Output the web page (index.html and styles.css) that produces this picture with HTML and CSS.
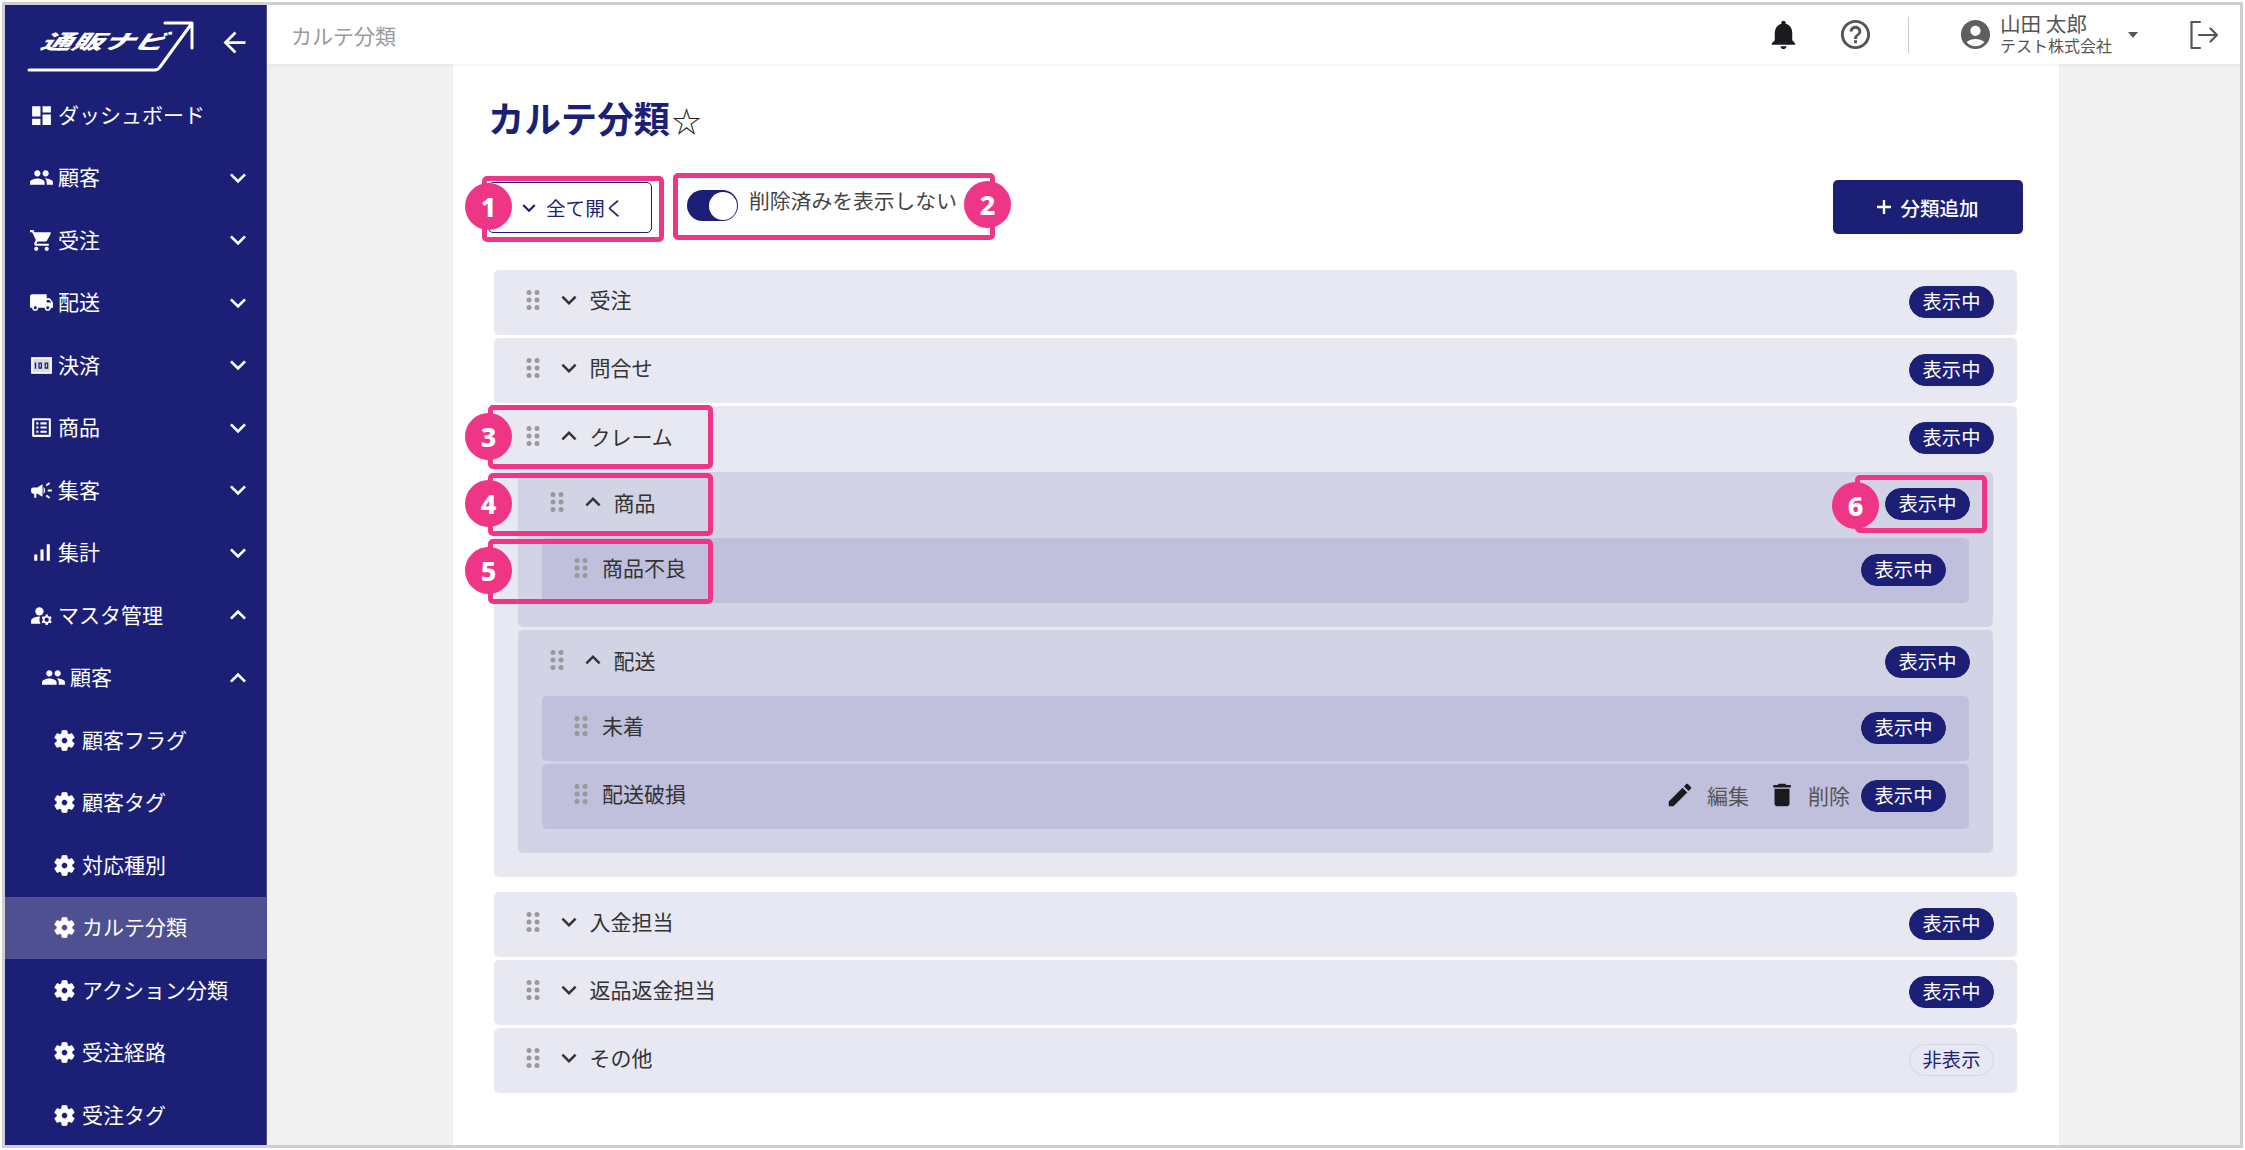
FILE: index.html
```html
<!DOCTYPE html>
<html lang="ja">
<head>
<meta charset="utf-8">
<title>カルテ分類</title>
<link rel="stylesheet" href="styles.css">
</head>
<body>
<svg class="defs" width="0" height="0" aria-hidden="true">
  <defs>
    <symbol id="i-more" viewBox="0 0 24 24"><path d="M16.59 8.59L12 13.17 7.41 8.59 6 10l6 6 6-6z"/></symbol>
    <symbol id="i-less" viewBox="0 0 24 24"><path d="M12 8l-6 6 1.41 1.41L12 10.83l4.59 4.58L18 14z"/></symbol>
    <symbol id="i-people" viewBox="0 0 24 24"><path d="M16 11c1.66 0 2.99-1.34 2.99-3S17.66 5 16 5c-1.66 0-3 1.34-3 3s1.34 3 3 3zm-8 0c1.66 0 2.99-1.34 2.99-3S9.66 5 8 5C6.34 5 5 6.34 5 8s1.34 3 3 3zm0 2c-2.33 0-7 1.17-7 3.5V19h14v-2.5c0-2.33-4.67-3.5-7-3.5zm8 0c-.29 0-.62.02-.97.05 1.16.84 1.97 1.97 1.97 3.45V19h6v-2.5c0-2.33-4.67-3.5-7-3.5z"/></symbol>
    <symbol id="i-gear" viewBox="0 0 24 24"><path stroke="#fff" stroke-width=".7" d="M19.14 12.94c.04-.3.06-.61.06-.94 0-.32-.02-.64-.07-.94l2.03-1.58c.18-.14.23-.41.12-.61l-1.92-3.32c-.12-.22-.37-.29-.59-.22l-2.39.96c-.5-.38-1.03-.7-1.62-.94l-.36-2.54c-.04-.24-.24-.41-.48-.41h-3.84c-.24 0-.43.17-.47.41l-.36 2.54c-.59.24-1.13.57-1.62.94l-2.39-.96c-.22-.08-.47 0-.59.22L2.74 8.87c-.12.21-.08.47.12.61l2.03 1.58c-.05.3-.09.63-.09.94s.02.64.07.94l-2.03 1.58c-.18.14-.23.41-.12.61l1.92 3.32c.12.22.37.29.59.22l2.39-.96c.5.38 1.03.7 1.62.94l.36 2.54c.05.24.24.41.48.41h3.84c.24 0 .44-.17.47-.41l.36-2.54c.59-.24 1.13-.56 1.62-.94l2.39.96c.22.08.47 0 .59-.22l1.92-3.32c.12-.22.07-.47-.12-.61l-2.01-1.58zM12 15c-1.65 0-3-1.35-3-3s1.35-3 3-3 3 1.35 3 3-1.35 3-3 3z"/></symbol>
    <symbol id="i-drag" viewBox="0 0 14 22"><circle cx="3" cy="3.5" r="2.5"/><circle cx="11" cy="3.5" r="2.5"/><circle cx="3" cy="11" r="2.5"/><circle cx="11" cy="11" r="2.5"/><circle cx="3" cy="18.5" r="2.5"/><circle cx="11" cy="18.5" r="2.5"/></symbol>
  </defs>
</svg>

<div class="frame">
  <aside class="sidebar">
    <div class="brand">
      <div class="logo">
        <svg class="logo-mark" viewBox="0 0 175 56" fill="none" stroke="#fff" stroke-width="3" stroke-linecap="round" stroke-linejoin="round"><path d="M4 52H130q3 0 5-3L167 5M140 5h27V30"/></svg>
        <span class="logo-text">通販ナビ</span>
      </div>
      <svg class="back" viewBox="0 0 24 24"><path d="M20 11H7.83l5.59-5.59L12 4l-8 8 8 8 1.41-1.41L7.83 13H20v-2z"/></svg>
    </div>
    <nav class="nav">
      <a class="nav-item"><svg class="nav-icon" viewBox="0 0 24 24"><path d="M3 13h8V3H3v10zm0 8h8v-6H3v6zm10 0h8V11h-8v10zm0-18v6h8V3h-8z"/></svg><span>ダッシュボード</span></a>
      <a class="nav-item"><svg class="nav-icon"><use href="#i-people"/></svg><span>顧客</span><svg class="nav-chev"><use href="#i-more"/></svg></a>
      <a class="nav-item"><svg class="nav-icon" viewBox="0 0 24 24"><path d="M7 18c-1.1 0-1.99.9-1.99 2S5.9 22 7 22s2-.9 2-2-.9-2-2-2zM1 2v2h2l3.6 7.59-1.35 2.45c-.16.28-.25.61-.25.96 0 1.1.9 2 2 2h12v-2H7.42c-.14 0-.25-.11-.25-.25l.03-.12.9-1.63h7.45c.75 0 1.41-.41 1.75-1.03l3.58-6.49c.08-.14.12-.31.12-.48 0-.55-.45-1-1-1H5.21l-.94-2H1zm16 16c-1.1 0-1.99.9-1.99 2s.89 2 1.99 2 2-.9 2-2-.9-2-2-2z"/></svg><span>受注</span><svg class="nav-chev"><use href="#i-more"/></svg></a>
      <a class="nav-item"><svg class="nav-icon" viewBox="0 0 24 24"><path d="M20 8h-3V4H3c-1.1 0-2 .9-2 2v11h2c0 1.66 1.34 3 3 3s3-1.34 3-3h6c0 1.66 1.34 3 3 3s3-1.34 3-3h2v-5l-3-4zM6 18.5c-.83 0-1.5-.67-1.5-1.5s.67-1.5 1.5-1.5 1.5.67 1.5 1.5-.67 1.5-1.5 1.5zm13.5-9l1.96 2.5H17V9.5h2.5zm-1.5 9c-.83 0-1.5-.67-1.5-1.5s.67-1.5 1.5-1.5 1.5.67 1.5 1.5-.67 1.5-1.5 1.5z"/></svg><span>配送</span><svg class="nav-chev"><use href="#i-more"/></svg></a>
      <a class="nav-item"><svg class="nav-icon" viewBox="0 0 24 24"><rect x="2" y="4" width="20" height="16" fill="#fff"/><rect x="3.6" y="5.6" width="16.8" height="12.8" fill="#d9daea"/><path fill="#1c1f76" d="M5.5 9h1.4v6H5.5zM9 9h3.5v6H9zm1.2 1.3v3.4h1.1v-3.4zM15 9h3.5v6H15zm1.2 1.3v3.4h1.1v-3.4z"/></svg><span>決済</span><svg class="nav-chev"><use href="#i-more"/></svg></a>
      <a class="nav-item"><svg class="nav-icon" viewBox="0 0 24 24"><path d="M19 5v14H5V5h14m1.1-2H3.9c-.5 0-.9.4-.9.9v16.2c0 .4.4.9.9.9h16.2c.4 0 .9-.5.9-.9V3.9c0-.5-.5-.9-.9-.9zM11 7h6v2h-6V7zm0 4h6v2h-6v-2zm0 4h6v2h-6zM7 7h2v2H7zm0 4h2v2H7zm0 4h2v2H7z"/></svg><span>商品</span><svg class="nav-chev"><use href="#i-more"/></svg></a>
      <a class="nav-item"><svg class="nav-icon" viewBox="0 0 24 24"><path d="M18 11v2h4v-2h-4zm-2 6.61c.96.71 2.21 1.65 3.2 2.39.4-.53.8-1.07 1.2-1.6-.99-.74-2.24-1.68-3.2-2.4-.4.54-.8 1.08-1.2 1.61zM20.4 5.6c-.4-.53-.8-1.07-1.2-1.6-.99.74-2.24 1.68-3.2 2.4.4.53.8 1.07 1.2 1.6.96-.72 2.21-1.65 3.2-2.4zM4 9c-1.1 0-2 .9-2 2v2c0 1.1.9 2 2 2h1v4h2v-4h1l5 3V6L8 9H4zm11.5 3c0-1.33-.58-2.53-1.5-3.35v6.69c.92-.81 1.5-2.01 1.5-3.34z"/></svg><span>集客</span><svg class="nav-chev"><use href="#i-more"/></svg></a>
      <a class="nav-item"><svg class="nav-icon" viewBox="0 0 24 24"><path d="M17 4h3v16h-3V4zM5 14h3v6H5v-6zm6-5h3v11h-3V9z"/></svg><span>集計</span><svg class="nav-chev"><use href="#i-more"/></svg></a>
      <a class="nav-item"><svg class="nav-icon" viewBox="0 0 24 24"><circle cx="10" cy="8" r="4"/><path d="M10.67 13.02c-.22-.01-.44-.02-.67-.02-2.42 0-4.68.67-6.61 1.82-.88.52-1.39 1.5-1.39 2.53V20h9.26c-.79-1.13-1.26-2.51-1.26-4 0-1.07.25-2.07.67-2.98zM20.75 16c0-.22-.03-.42-.06-.63l1.14-1.01-1-1.73-1.45.49c-.32-.27-.68-.48-1.08-.63L18 11h-2l-.3 1.49c-.4.15-.76.36-1.08.63l-1.45-.49-1 1.73 1.14 1.01c-.03.21-.06.41-.06.63s.03.42.06.63l-1.14 1.01 1 1.73 1.45-.49c.32.27.68.48 1.08.63L16 21h2l.3-1.49c.4-.15.76-.36 1.08-.63l1.45.49 1-1.73-1.14-1.01c.03-.21.06-.41.06-.63zM17 18c-1.1 0-2-.9-2-2s.9-2 2-2 2 .9 2 2-.9 2-2 2z"/></svg><span>マスタ管理</span><svg class="nav-chev"><use href="#i-less"/></svg></a>
      <a class="nav-item nav-sub"><svg class="nav-icon"><use href="#i-people"/></svg><span>顧客</span><svg class="nav-chev"><use href="#i-less"/></svg></a>
      <a class="nav-item nav-leaf"><svg class="nav-icon"><use href="#i-gear"/></svg><span>顧客フラグ</span></a>
      <a class="nav-item nav-leaf"><svg class="nav-icon"><use href="#i-gear"/></svg><span>顧客タグ</span></a>
      <a class="nav-item nav-leaf"><svg class="nav-icon"><use href="#i-gear"/></svg><span>対応種別</span></a>
      <a class="nav-item nav-leaf is-active"><svg class="nav-icon"><use href="#i-gear"/></svg><span>カルテ分類</span></a>
      <a class="nav-item nav-leaf"><svg class="nav-icon"><use href="#i-gear"/></svg><span>アクション分類</span></a>
      <a class="nav-item nav-leaf"><svg class="nav-icon"><use href="#i-gear"/></svg><span>受注経路</span></a>
      <a class="nav-item nav-leaf"><svg class="nav-icon"><use href="#i-gear"/></svg><span>受注タグ</span></a>
    </nav>
  </aside>

  <div class="content">
    <header class="topbar">
      <div class="crumb">カルテ分類</div>
      <div class="top-actions">
        <svg class="top-icon bell" viewBox="0 0 24 24"><path d="M12 22c1.1 0 2-.9 2-2h-4c0 1.1.89 2 2 2zm6-6v-5c0-3.07-1.64-5.64-4.5-6.32V4c0-.83-.67-1.5-1.5-1.5s-1.5.67-1.5 1.5v.68C7.63 5.36 6 7.92 6 11v5l-2 2v1h16v-1l-2-2z"/></svg>
        <svg class="top-icon help" viewBox="0 0 24 24"><path d="M11 18h2v-2h-2v2zm1-16C6.48 2 2 6.48 2 12s4.48 10 10 10 10-4.48 10-10S17.52 2 12 2zm0 18c-4.41 0-8-3.59-8-8s3.59-8 8-8 8 3.59 8 8-3.59 8-8 8zm0-14c-2.21 0-4 1.79-4 4h2c0-1.1.9-2 2-2s2 .9 2 2c0 2-3 1.75-3 5h2c0-2.25 3-2.5 3-5 0-2.21-1.79-4-4-4z"/></svg>
        <span class="divider"></span>
        <svg class="top-icon account" viewBox="0 0 24 24"><path d="M12 2C6.48 2 2 6.48 2 12s4.48 10 10 10 10-4.48 10-10S17.52 2 12 2zm0 4c1.93 0 3.5 1.57 3.5 3.5S13.93 13 12 13s-3.5-1.57-3.5-3.5S10.07 6 12 6zm0 14c-2.03 0-4.43-.82-6.14-2.88C7.55 15.8 9.68 15 12 15s4.45.8 6.14 2.12C16.43 19.18 14.03 20 12 20z"/></svg>
        <div class="user">
          <div class="user-name">山田 太郎</div>
          <div class="user-org">テスト株式会社</div>
        </div>
        <span class="caret"></span>
        <svg class="logout" viewBox="0 0 30 30" fill="none" stroke="#555" stroke-width="2.2" stroke-linecap="round" stroke-linejoin="round"><path d="M11 2H2.5v26H11M10 15h18M21.5 8.5L28 15l-6.5 6.5"/></svg>
      </div>
    </header>

    <main class="main">
      <section class="card">
        <h1 class="title">カルテ分類<span class="star">☆</span></h1>
        <div class="toolbar">
          <button class="btn-open"><svg class="btn-chev"><use href="#i-more"/></svg>全て開く</button>
          <div class="switch-wrap">
            <span class="switch"><span class="knob"></span></span>
            <span class="switch-label">削除済みを表示しない</span>
          </div>
          <button class="btn-add"><svg class="plus" viewBox="0 0 16 16" fill="none" stroke="#fff" stroke-width="2.4"><path d="M8 1v14M1 8h14"/></svg>分類追加</button>
        </div>

        <div class="tree">
          <div class="node l1">
            <div class="row"><svg class="drag"><use href="#i-drag"/></svg><svg class="chev"><use href="#i-more"/></svg><span class="label">受注</span><span class="badge">表示中</span></div>
          </div>
          <div class="node l1">
            <div class="row"><svg class="drag"><use href="#i-drag"/></svg><svg class="chev"><use href="#i-more"/></svg><span class="label">問合せ</span><span class="badge">表示中</span></div>
          </div>
          <div class="node l1 is-open">
            <div class="row"><svg class="drag"><use href="#i-drag"/></svg><svg class="chev"><use href="#i-less"/></svg><span class="label">クレーム</span><span class="badge">表示中</span></div>
            <div class="children">
              <div class="node l2 is-open">
                <div class="row"><svg class="drag"><use href="#i-drag"/></svg><svg class="chev"><use href="#i-less"/></svg><span class="label">商品</span><span class="badge">表示中</span></div>
                <div class="children">
                  <div class="node l3">
                    <div class="row"><svg class="drag"><use href="#i-drag"/></svg><span class="label">商品不良</span><span class="badge">表示中</span></div>
                  </div>
                </div>
              </div>
              <div class="node l2 is-open">
                <div class="row"><svg class="drag"><use href="#i-drag"/></svg><svg class="chev"><use href="#i-less"/></svg><span class="label">配送</span><span class="badge">表示中</span></div>
                <div class="children">
                  <div class="node l3">
                    <div class="row"><svg class="drag"><use href="#i-drag"/></svg><span class="label">未着</span><span class="badge">表示中</span></div>
                  </div>
                  <div class="node l3">
                    <div class="row">
                      <svg class="drag"><use href="#i-drag"/></svg><span class="label">配送破損</span>
                      <span class="row-actions">
                        <svg class="act-icon" viewBox="0 0 24 24"><path d="M3 17.25V21h3.75L17.81 9.94l-3.75-3.75L3 17.25zM20.71 7.04c.39-.39.39-1.02 0-1.41l-2.34-2.34c-.39-.39-1.02-.39-1.41 0l-1.83 1.83 3.75 3.75 1.83-1.83z"/></svg><span class="act-text">編集</span>
                        <svg class="act-icon act-del" viewBox="0 0 24 24"><path d="M6 19c0 1.1.9 2 2 2h8c1.1 0 2-.9 2-2V7H6v12zM19 4h-3.5l-1-1h-5l-1 1H5v2h14V4z"/></svg><span class="act-text">削除</span>
                      </span>
                      <span class="badge">表示中</span>
                    </div>
                  </div>
                </div>
              </div>
            </div>
          </div>
          <div class="node l1">
            <div class="row"><svg class="drag"><use href="#i-drag"/></svg><svg class="chev"><use href="#i-more"/></svg><span class="label">入金担当</span><span class="badge">表示中</span></div>
          </div>
          <div class="node l1">
            <div class="row"><svg class="drag"><use href="#i-drag"/></svg><svg class="chev"><use href="#i-more"/></svg><span class="label">返品返金担当</span><span class="badge">表示中</span></div>
          </div>
          <div class="node l1">
            <div class="row"><svg class="drag"><use href="#i-drag"/></svg><svg class="chev"><use href="#i-more"/></svg><span class="label">その他</span><span class="badge badge-off">非表示</span></div>
          </div>
        </div>
      </section>
    </main>
  </div>
</div>

<div class="callout box-1"></div><div class="pin pin-1">1</div>
<div class="callout box-2"></div><div class="pin pin-2">2</div>
<div class="callout box-3"></div><div class="pin pin-3">3</div>
<div class="callout box-4"></div><div class="pin pin-4">4</div>
<div class="callout box-5"></div><div class="pin pin-5">5</div>
<div class="callout box-6"></div><div class="pin pin-6">6</div>
</body>
</html>
```
FILE: styles.css
```css
* { box-sizing: border-box; }
html, body { margin: 0; padding: 0; }
body {
  position: relative;
  width: 2245px;
  height: 1150px;
  padding: 2px;
  overflow: hidden;
  background: #fff;
  font-family: "Noto Sans CJK JP", "Noto Sans", sans-serif;
  color: #333;
}
.defs { position: absolute; }

.frame {
  display: flex;
  width: 2241px;
  height: 1146px;
  border: 3px solid #cfcfcf;
  overflow: hidden;
}

/* sidebar */
.sidebar {
  flex: none;
  width: 262px;
  background: #1c1f76;
  border-right: 1px solid #4c4f94;
  color: #fff;
  overflow: hidden;
}
.brand {
  display: flex;
  align-items: flex-start;
  justify-content: space-between;
  height: 79px;
  padding: 13px 15px 0 20px;
}
.logo { position: relative; width: 175px; height: 56px; }
.logo-mark { display: block; width: 175px; height: 56px; }
.logo-text {
  position: absolute;
  left: 17px;
  top: 10px;
  font-size: 20px;
  line-height: 26px;
  font-weight: 900;
  font-style: italic;
  white-space: nowrap;
  transform-origin: left center;
  transform: scaleX(1.55) skewX(-12deg);
}
.back { width: 33px; height: 33px; margin-top: 8px; fill: #fff; }

.nav-item {
  display: flex;
  align-items: center;
  height: 62.5px;
  padding: 0 12px 0 23.5px;
  font-size: 21px;
  line-height: 1;
  color: #fff;
  white-space: nowrap;
}
.nav-item span { margin-top: -2px; }
.nav-icon { flex: none; width: 25px; height: 25px; margin-right: 4.5px; fill: #fff; }
.nav-chev { flex: none; width: 32px; height: 32px; margin-left: auto; fill: #fff; }
.nav-sub { padding-left: 35.5px; }
.nav-leaf { padding-left: 47px; }
.nav-leaf .nav-icon { margin-right: 5px; }
.is-active { background: #4e5092; }

/* top bar */
.content { flex: 1; min-width: 0; display: flex; flex-direction: column; }
.topbar {
  flex: none;
  position: relative;
  z-index: 1;
  display: flex;
  align-items: center;
  justify-content: space-between;
  height: 59px;
  padding: 0 21px 0 24px;
  background: #fff;
  box-shadow: 0 1px 4px rgba(0, 0, 0, .06);
}
.crumb { font-size: 21px; color: #9a9a9a; }
.top-actions { display: flex; align-items: center; }
.top-icon { flex: none; width: 35px; height: 35px; }
.bell { fill: #1b1b1f; }
.help { margin-left: 37px; fill: #555; }
.divider { width: 1px; height: 36px; margin: 0 49px 0 35px; background: #c9c9c9; }
.account { fill: #5f5f5f; }
.user { width: 116px; margin-left: 7px; color: #555; white-space: nowrap; }
.user-name { font-size: 20.6px; line-height: 20px; }
.user-org { font-size: 16px; line-height: 24px; }
.caret {
  width: 0;
  height: 0;
  margin: 0 51px 0 12px;
  border-left: 5.5px solid transparent;
  border-right: 5.5px solid transparent;
  border-top: 6px solid #555;
}
.logout { flex: none; width: 30px; height: 30px; }

/* main */
.main { flex: 1; min-height: 0; background: #f1f1f1; padding-left: 186px; overflow: hidden; }
.card {
  width: 1606px;
  height: 100%;
  padding: 31px 36px 0 35px;
  background: #fff;
}
.title {
  height: 44px;
  margin: 0;
  font-size: 36.4px;
  line-height: 44px;
  font-weight: 700;
  color: #1c1f76;
}
.star { margin-left: 2px; font-size: 29px; font-weight: 400; color: #222; }

.toolbar {
  display: flex;
  align-items: flex-start;
  height: 54px;
  margin-top: 41px;
}
.btn-open {
  display: flex;
  align-items: center;
  width: 164px;
  height: 51px;
  margin-top: 2px;
  padding: 0 0 0 27px;
  border: 1.5px solid #1c1f76;
  border-radius: 5px;
  background: #fff;
  font: inherit;
  font-size: 19.6px;
  color: #1c1f76;
}
.btn-chev { flex: none; width: 26px; height: 26px; margin-right: 4px; fill: #1c1f76; }
.switch-wrap { display: flex; align-items: flex-start; margin-left: 35px; margin-top: 10px; }
.switch {
  position: relative;
  flex: none;
  width: 51px;
  height: 31px;
  border-radius: 16px;
  background: #1c1f76;
}
.knob {
  position: absolute;
  top: 1.5px;
  right: 1.5px;
  width: 28px;
  height: 28px;
  border-radius: 50%;
  background: #fff;
}
.switch-label { margin: -2px 0 0 11px; font-size: 20.8px; line-height: 24px; color: #444; white-space: nowrap; }
.btn-add {
  display: flex;
  align-items: center;
  justify-content: center;
  width: 190px;
  height: 54px;
  margin-left: auto;
  padding-left: 5px;
  border: 0;
  border-radius: 5px;
  background: #1c1f76;
  color: #fff;
  font: inherit;
  font-size: 19.5px;
  font-weight: 500;
}
.plus { flex: none; width: 16px; height: 16px; margin-right: 8px; }

/* tree */
.tree { margin: 36px 6px 0; }
.node { border-radius: 5px; }
.l1 { background: #e8e8f2; margin-bottom: 3px; }
.l1.is-open { margin-bottom: 15px; }
.l2 { background: #d2d3e5; }
.l3 { background: #c0c0dc; }
.row {
  display: flex;
  align-items: center;
  height: 65px;
  padding: 0 23px 0 32px;
}
.is-open > .row { height: 66px; }
.children { display: flex; flex-direction: column; gap: 3px; padding: 0 24px 24px; }
.drag { flex: none; width: 14px; height: 22px; margin-bottom: 6px; fill: #999; }
.chev { flex: none; width: 30px; height: 30px; margin: 0 6px 6px 13.5px; fill: #333; }
.label { font-size: 21px; line-height: 24px; margin-bottom: 7px; color: #333; white-space: nowrap; }
.l3 .label { margin-left: 14px; }
.badge {
  flex: none;
  width: 85px;
  height: 32px;
  margin-left: auto;
  margin-bottom: 2px;
  border: 1px solid #1c1f76;
  border-radius: 16px;
  background: #1c1f76;
  color: #fff;
  font-size: 19.3px;
  line-height: 29px;
  text-align: center;
}
.badge-off { background: transparent; border-color: #d6d6e6; color: #1c1f76; }
.row-actions { display: flex; align-items: center; margin: 0 11px 4px auto; }
.row-actions + .badge { margin-left: 0; }
.act-icon { flex: none; width: 30px; height: 30px; margin-right: 12px; fill: #1b1b1f; }
.act-del { margin-left: 18px; margin-right: 11px; }
.act-text { font-size: 21px; color: #555; }

/* callouts */
.callout {
  position: absolute;
  border: 5px solid #ee3586;
  border-radius: 5px;
}
.pin {
  position: absolute;
  display: flex;
  align-items: center;
  justify-content: center;
  width: 47px;
  height: 47px;
  border-radius: 50%;
  background: #ee3586;
  color: #fff;
  font-family: "Noto Sans", sans-serif;
  font-weight: 800;
  font-size: 27px;
  line-height: 1;
}
.box-1 { left: 482px; top: 176px; width: 182px; height: 66px; }
.box-2 { left: 673px; top: 173px; width: 322px; height: 67px; }
.box-3 { left: 488px; top: 405px; width: 225px; height: 64px; }
.box-4 { left: 488px; top: 473px; width: 225px; height: 63px; }
.box-5 { left: 488px; top: 539px; width: 225px; height: 65px; }
.box-6 { left: 1855px; top: 475px; width: 132px; height: 58px; }
.pin-1 { left: 465px; top: 183px; }
.pin-2 { left: 964px; top: 181px; }
.pin-3 { left: 465px; top: 413px; }
.pin-4 { left: 465px; top: 480px; }
.pin-5 { left: 465px; top: 547px; }
.pin-6 { left: 1832px; top: 482px; }
```
